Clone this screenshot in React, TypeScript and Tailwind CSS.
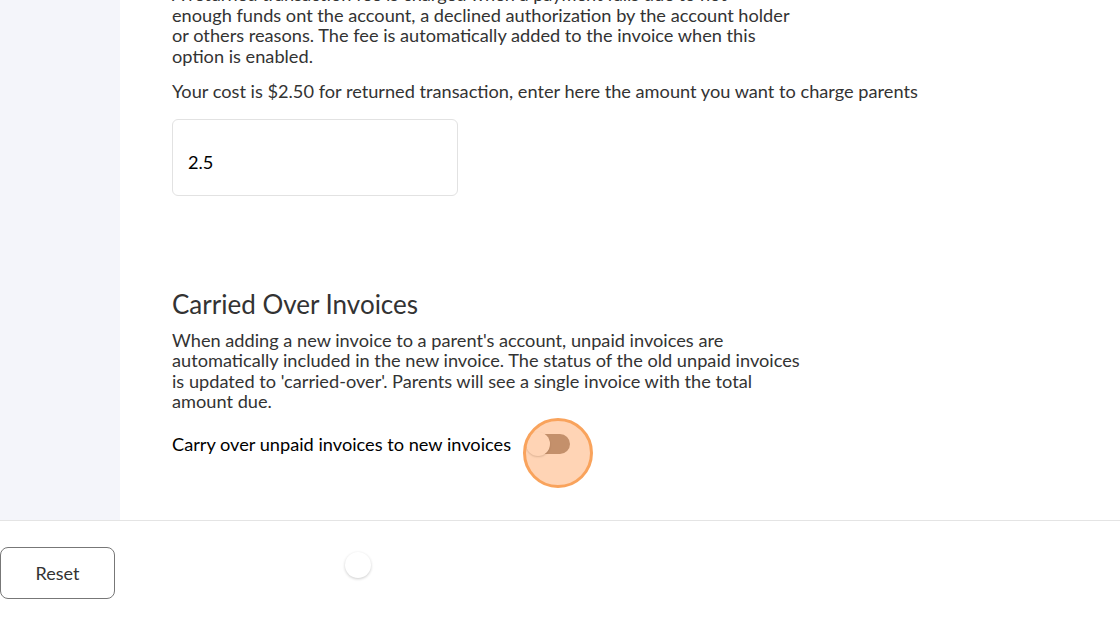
import React from "react";

export default function App() {
  return (
    <div className="h-[626px] w-[1120px] overflow-hidden bg-white text-[#333] [font-family:Lato,'Open_Sans',sans-serif]">
      <div className="flex h-[521px] border-b border-[#e4e4e4]">
        <div className="w-[120px] shrink-0 bg-[#f4f5fa]" />
        <div className="flex-1 pl-[52px] -mt-[16px] whitespace-nowrap">
          <p className="text-[18.2px] leading-[20.5px]">
            A returned transaction fee is charged when a payment fails due to not<br />
            enough funds ont the account, a declined authorization by the account holder<br />
            or others reasons. The fee is automatically added to the invoice when this<br />
            option is enabled.
          </p>
          <p className="mt-[15px] text-[18.2px] leading-[20.5px]">
            Your cost is $2.50 for returned transaction, enter here the amount you want to charge parents
          </p>
          <div className="mt-[17px] flex h-[77px] w-[286px] items-center rounded-[6px] border border-[#e2e2e2] px-[15px] pt-[12px] text-[18.2px] text-black">
            2.5
          </div>
          <h2 className="mt-[93px] text-[26px] leading-[30px] text-[#333]">Carried Over Invoices</h2>
          <p className="mt-[11px] text-[18.2px] leading-[20.5px]">
            When adding a new invoice to a parent's account, unpaid invoices are<br />
            automatically included in the new invoice. The status of the old unpaid invoices<br />
            is updated to 'carried-over'. Parents will see a single invoice with the total<br />
            amount due.
          </p>
          <div className="mt-[22px] flex items-center gap-[15px]">
            <span className="text-[18.2px] leading-[20.5px] text-black">Carry over unpaid invoices to new invoices</span>
            <div className="relative h-[20px] w-[44px] rounded-full bg-[#948479]">
              <div className="absolute left-0 top-[-2px] h-[24px] w-[24px] rounded-full bg-white shadow-[0_1px_2px_rgba(0,0,0,0.25)]" />
              <div className="absolute left-[-3px] top-[-16px] h-[70px] w-[70px] rounded-full border-[3px] border-[#f9a35c] bg-[rgba(255,160,90,0.45)]" />
            </div>
          </div>
        </div>
      </div>
      <div className="relative">
        <button className="mt-[26px] h-[52px] w-[115px] rounded-[8px] border border-[#777] bg-white text-[18px] text-[#333]">
          Reset
        </button>
        <div className="absolute left-[345px] top-[31px] h-[26px] w-[26px] rounded-full bg-white shadow-[0_1px_3px_rgba(0,0,0,0.2)]" />
      </div>
    </div>
  );
}
